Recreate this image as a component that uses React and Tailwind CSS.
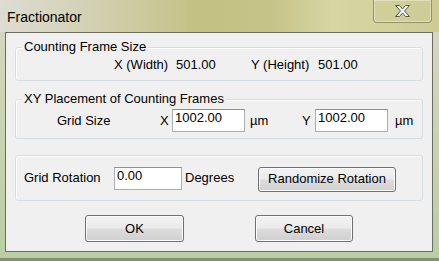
import React from 'react';

// Win7 style "Fractionator" dialog

function GroupBox({ label, className, children }) {
  return (
    <div className={`relative ml-[9px] w-[408px] rounded-[3px] border border-[#d5dfe5] shadow-[inset_1px_1px_0_#ffffff] ${className}`}>
      {label && (
        <span className="absolute left-[6px] top-[-9px] bg-[#f0f0f0] px-[2px] leading-[16px]">{label}</span>
      )}
      {children}
    </div>
  );
}

function TextBox({ value, className }) {
  return (
    <div className={`h-[23px] border border-[#abadb3] border-t-[#8d9095] bg-white pl-[2px] leading-[16px] ${className}`}>
      {value}
    </div>
  );
}

function Button({ children, className }) {
  return (
    <button className={`rounded-[3px] border border-[#707070] bg-[linear-gradient(180deg,#f2f2f2_0%,#ebebeb_48%,#dddddd_52%,#cfcfcf_100%)] leading-[16px] text-black shadow-[inset_0_0_0_1px_#fcfcfc] ${className}`}>
      {children}
    </button>
  );
}

export default function App() {
  return (
    <div
      className="flex h-[261px] w-[439px] flex-col bg-[linear-gradient(180deg,#d8d7c6_0%,#ccd3b2_45%,#b8cea2_100%)] text-[13px] text-black"
      style={{ fontFamily: '"Liberation Sans", Arial, sans-serif' }}
    >
      {/* title bar */}
      <div className="flex h-[32px] items-start bg-[linear-gradient(90deg,#dddcd2_0%,#d3d1b4_20%,#c4c185_45%,#c6c388_62%,#d7d6a4_76%,#cecc94_100%)]">
        <span className="ml-[7px] mt-[8px] text-[14px] leading-[18px] text-black">Fractionator</span>
        <div className="ml-auto mr-[7px] flex h-[23px] w-[59px] items-center justify-center rounded-b-[4px] border border-t-0 border-[#7c7a58]/70 bg-[#cfcd98]/60 shadow-[inset_0_0_0_1px_rgba(255,255,255,0.35)]">
          <svg width="17" height="14" viewBox="0 0 17 14">
            <path
              d="M1.5 1.5 H5.5 L8.5 5 L11.5 1.5 H15.5 L10.5 7 L15.5 12.5 H11.5 L8.5 9 L5.5 12.5 H1.5 L6.5 7 Z"
              fill="#f4f4f4"
              stroke="#55584e"
              strokeWidth="1"
              strokeLinejoin="round"
            />
          </svg>
        </div>
      </div>

      {/* client area */}
      <div className="ml-[5px] flex h-[220px] w-[428px] flex-col border border-[#6c6c62] bg-[#f0f0f0]">
        <GroupBox label="Counting Frame Size" className="mt-[14px] h-[34px]">
          <div className="flex h-full items-center pt-[2px]">
            <span className="ml-[98px] w-[62px]">X (Width)</span>
            <span className="w-[75px]">501.00</span>
            <span className="w-[67px]">Y (Height)</span>
            <span>501.00</span>
          </div>
        </GroupBox>

        <GroupBox label="XY Placement of Counting Frames" className="mt-[18px] h-[40px]">
          <div className="flex h-full items-center pt-[3px]">
            <span className="ml-[41px] w-[103px]">Grid Size</span>
            <span className="w-[12px]">X</span>
            <TextBox value="1002.00" className="w-[73px]" />
            <span className="ml-[5px] w-[52px]">µm</span>
            <span className="w-[13px]">Y</span>
            <TextBox value="1002.00" className="w-[73px]" />
            <span className="ml-[7px]">µm</span>
          </div>
        </GroupBox>

        <GroupBox className="mt-[16px] h-[46px]">
          <div className="flex h-full items-center">
            <span className="ml-[8px] w-[90px]">Grid Rotation</span>
            <TextBox value="0.00" className="w-[68px]" />
            <span className="ml-[3px] w-[73px]">Degrees</span>
            <Button className="mt-[2px] h-[25px] w-[138px]">Randomize Rotation</Button>
          </div>
        </GroupBox>

        <div className="mt-[14px] flex">
          <Button className="ml-[79px] h-[27px] w-[99px]">OK</Button>
          <Button className="ml-[71px] h-[27px] w-[98px]">Cancel</Button>
        </div>
      </div>
      <div className="mt-auto h-[3px] w-full bg-[#5f6a55]/60" />
    </div>
  );
}
